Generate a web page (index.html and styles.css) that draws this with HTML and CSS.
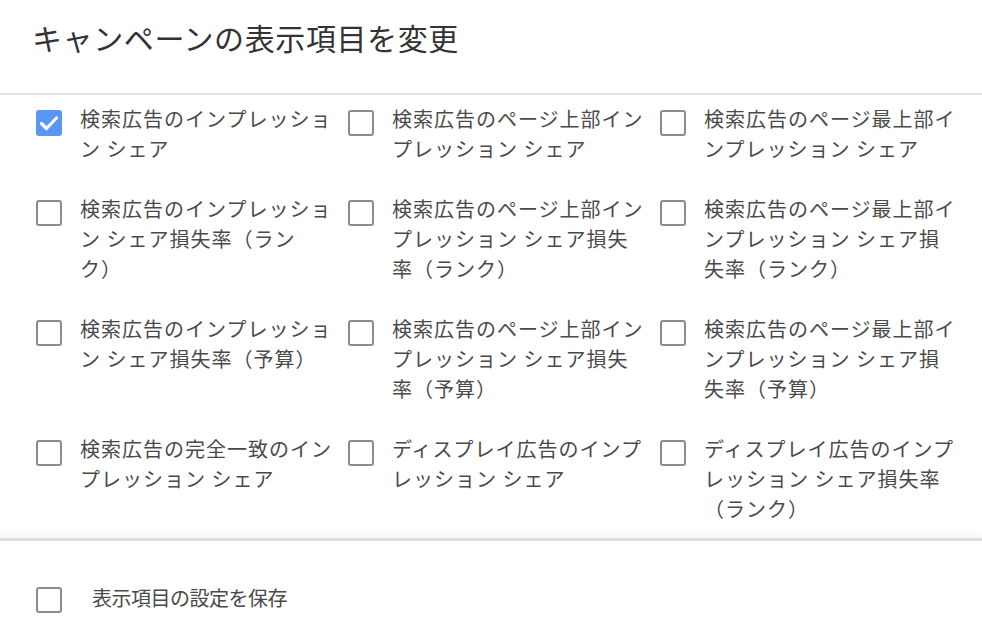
FILE: index.html
```html
<!DOCTYPE html>
<html lang="ja">
<head>
<meta charset="utf-8">
<title>キャンペーンの表示項目を変更</title>
<link rel="stylesheet" href="styles.css">
</head>
<body>
<div class="dialog">
  <header class="header">
    <h1 class="title">キャンペーンの表示項目を変更</h1>
  </header>
  <main class="body">
    <div class="grid">
      <label class="item"><span class="box checked"><svg viewBox="0 0 26 26" width="26" height="26"><polyline points="5.5,13.5 10.5,18.5 20.5,8" fill="none" stroke="#fff" stroke-width="3.2" stroke-linecap="round" stroke-linejoin="round"/></svg></span><span class="text">検索広告のインプレッション シェア</span></label>
      <label class="item"><span class="box"></span><span class="text">検索広告のページ上部インプレッション シェア</span></label>
      <label class="item"><span class="box"></span><span class="text">検索広告のページ最上部インプレッション シェア</span></label>

      <label class="item"><span class="box"></span><span class="text">検索広告のインプレッション シェア損失率（ランク）</span></label>
      <label class="item"><span class="box"></span><span class="text">検索広告のページ上部インプレッション シェア損失率（ランク）</span></label>
      <label class="item"><span class="box"></span><span class="text">検索広告のページ最上部インプレッション シェア損失率（ランク）</span></label>

      <label class="item"><span class="box"></span><span class="text">検索広告のインプレッション シェア損失率（予算）</span></label>
      <label class="item"><span class="box"></span><span class="text">検索広告のページ上部インプレッション シェア損失率（予算）</span></label>
      <label class="item"><span class="box"></span><span class="text">検索広告のページ最上部インプレッション シェア損失率（予算）</span></label>

      <label class="item"><span class="box"></span><span class="text">検索広告の完全一致のインプレッション シェア</span></label>
      <label class="item"><span class="box"></span><span class="text">ディスプレイ広告のインプレッション シェア</span></label>
      <label class="item"><span class="box"></span><span class="text">ディスプレイ広告のインプレッション シェア損失率（ランク）</span></label>
    </div>
  </main>
  <footer class="footer">
    <label class="save"><span class="box"></span><span class="save-text">表示項目の設定を保存</span></label>
  </footer>
</div>
</body>
</html>
```
FILE: styles.css
```css
html, body {
  margin: 0;
  padding: 0;
  background: #fff;
}
body {
  font-family: "Noto Sans CJK JP", "Noto Sans", sans-serif;
  color: #4a4a4a;
  width: 982px;
  height: 626px;
  overflow: hidden;
  text-spacing-trim: space-all;
}
.dialog {
  display: flex;
  flex-direction: column;
  height: 626px;
}
.header {
  height: 76px;
  padding: 17px 0 0 32px;
  border-bottom: 2px solid #e2e2e2;
}
.title {
  margin: 0;
  font-size: 30px;
  font-weight: 400;
  line-height: 40px;
  letter-spacing: 0.6px;
  color: #333;
}
.body {
  height: 443px;
  box-sizing: border-box;
  padding: 9px 0 0 36px;
}
.grid {
  display: grid;
  grid-template-columns: repeat(3, 312px);
  row-gap: 30px;
}
.item {
  display: flex;
  align-items: flex-start;
  gap: 18px;
}
.box {
  flex: 0 0 auto;
  box-sizing: border-box;
  width: 26px;
  height: 26px;
  border: 2.5px solid #8c8c8c;
  border-radius: 3px;
  margin-top: 6px;
  display: block;
}
.box.checked {
  background: #5b96f6;
  border: none;
}
.box svg {
  display: block;
}
.text {
  width: 254px;
  font-size: 20px;
  line-height: 30px;
  letter-spacing: 1px;
  text-spacing-trim: space-all;
}
.footer {
  flex: 1;
  border-top: 3px solid #dedede;
  box-shadow: 0 -6px 8px rgba(0, 0, 0, 0.035);
  padding: 42px 0 0 36px;
}
.save {
  display: flex;
  align-items: flex-start;
  gap: 30px;
}
.save .box {
  margin-top: 4px;
}
.save-text {
  font-size: 20px;
  line-height: 30px;
  letter-spacing: -0.5px;
}
```
